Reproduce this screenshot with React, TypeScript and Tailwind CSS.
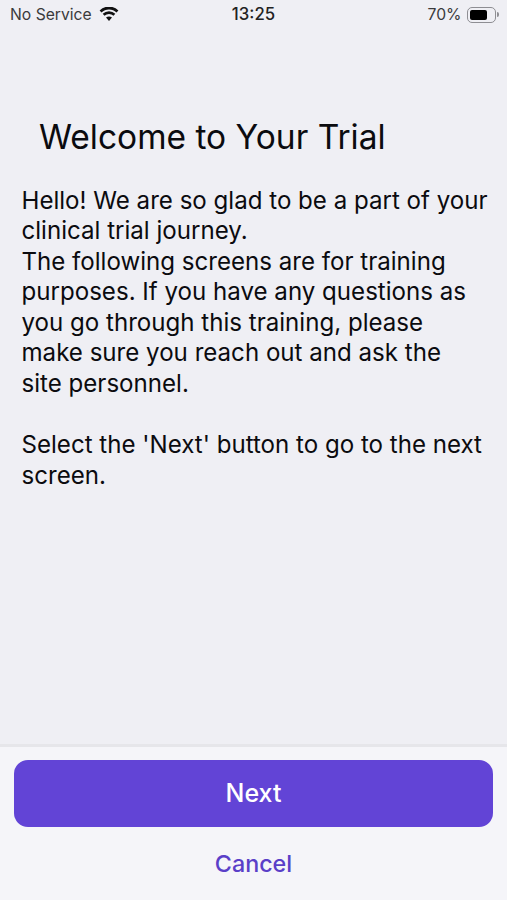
export default function App() {
  return (
    <div className="w-[507px] h-[900px] flex flex-col bg-[#efeff4] text-[#0b0b0f] overflow-hidden" style={{ fontFamily: 'Inter, "Liberation Sans", sans-serif' }}>
      <div className="h-[30px] flex items-center justify-between pl-[10px] pr-[8px] text-[15.7px] text-[#3a3a3c]">
        <div className="flex items-center gap-[7px] w-[178px]">
          <span>No Service</span>
          <svg width="20" height="15" viewBox="0 0 20 15" fill="#111"><path d="M10 14 L7 10.5 A5 5 0 0 1 13 10.5 Z" /><path d="M5.5 8.8 L3.7 6.8 A9 9 0 0 1 16.3 6.8 L14.5 8.8 A6.5 6.5 0 0 0 5.5 8.8 Z" /><path d="M2.5 5.6 L.6 3.6 A13 13 0 0 1 19.4 3.6 L17.5 5.6 A10.5 10.5 0 0 0 2.5 5.6 Z" /></svg>
        </div>
        <span className="font-medium text-[16.8px] text-[#222]">13:25</span>
        <div className="flex items-center justify-end gap-[6px] w-[180px]">
          <span>70%</span>
          <div className="flex items-center gap-[1px]">
            <div className="w-[29px] h-[16px] border-[1.5px] border-[#8e8e93] rounded-[5px] p-[2px]"><div className="h-full w-[72%] bg-black rounded-[2px]" /></div>
            <div className="w-[1.5px] h-[5px] bg-[#8e8e93] rounded-r-full" />
          </div>
        </div>
      </div>
      <div className="flex-1 pl-[21.5px]">
        <h1 className="mt-[85px] ml-[17.5px] text-[33.5px] leading-[44px] font-normal">Welcome to Your Trial</h1>
        <p className="mt-[26.5px] text-[24.1px] leading-[30.6px] whitespace-pre">{"Hello! We are so glad to be a part of your\nclinical trial journey.\nThe following screens are for training\npurposes. If you have any questions as\nyou go through this training, please\nmake sure you reach out and ask the\nsite personnel.\n\nSelect the 'Next' button to go to the next\nscreen."}</p>
      </div>
      <div className="h-[156px] bg-[#f5f5f9] border-t-[3px] border-[#e6e6ea] px-[14px] pt-[13px] flex flex-col items-center">
        <button className="w-full h-[67px] pt-[1px] rounded-[14px] bg-[#6244d6] text-white text-[25px] font-medium">Next</button>
        <button className="mt-[20px] text-[#5a3fc8] text-[23.3px] font-medium">Cancel</button>
      </div>
    </div>
  );
}
